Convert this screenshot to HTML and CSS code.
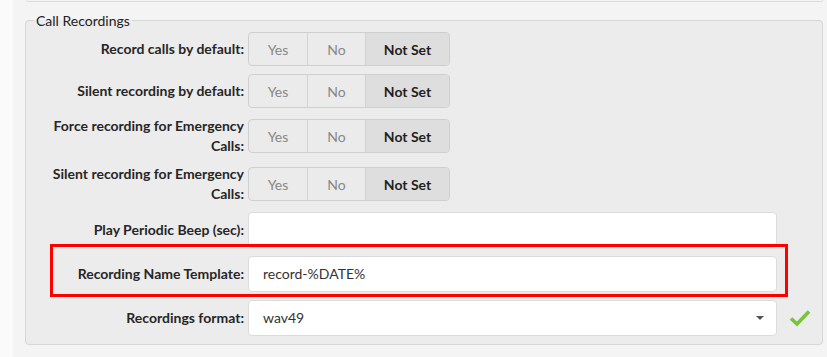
FILE: index.html
```html
<!DOCTYPE html>
<html>
<head>
	<meta charset="UTF-8">
	<title>Call Recordings</title>
	<link rel="stylesheet" href="styles.css">
</head>
<body>
	<div class="page">
		<div class="top-panel"></div>
		<fieldset class="group">
			<legend>Call Recordings</legend>

			<div class="row">
				<label class="lbl">Record calls by default:</label>
				<div class="btns">
					<span class="b yes">Yes</span>
					<span class="b no">No</span>
					<span class="b notset on">Not Set</span>
				</div>
			</div>

			<div class="row">
				<label class="lbl">Silent recording by default:</label>
				<div class="btns">
					<span class="b yes">Yes</span>
					<span class="b no">No</span>
					<span class="b notset on">Not Set</span>
				</div>
			</div>

			<div class="row">
				<label class="lbl">Force recording for Emergency Calls:</label>
				<div class="btns">
					<span class="b yes">Yes</span>
					<span class="b no">No</span>
					<span class="b notset on">Not Set</span>
				</div>
			</div>

			<div class="row">
				<label class="lbl">Silent recording for Emergency Calls:</label>
				<div class="btns">
					<span class="b yes">Yes</span>
					<span class="b no">No</span>
					<span class="b notset on">Not Set</span>
				</div>
			</div>

			<div class="row">
				<label class="lbl">Play Periodic Beep (sec):</label>
				<div class="field"></div>
				<div class="icon"></div>
			</div>

			<div class="row marked">
				<label class="lbl">Recording Name Template:</label>
				<div class="field">record-%DATE%</div>
				<div class="icon"></div>
			</div>

			<div class="row">
				<label class="lbl">Recordings format:</label>
				<div class="field select">wav49<span class="caret"></span></div>
				<div class="icon">
					<svg width="22" height="18" viewBox="0 0 22 18">
						<polyline points="2,9.5 8,15 20,2.5" fill="none" stroke="#78c43a" stroke-width="3.6"/>
					</svg>
				</div>
			</div>
		</fieldset>
	</div>
</body>
</html>
```

FILE: styles.css
```css
body {
	margin: 0;
	background: #fafafa;
	font-family: Lato, "Liberation Sans", sans-serif;
	color: #333;
}

.page {
	margin-left: 13px;
	background: #f4f4f4;
	height: 357px;
	padding: 0 4px 0 12px;
	overflow: hidden;
}

.top-panel {
	height: 1px;
	margin-left: 1px;
	border: 1px solid #dcdcdc;
	border-top: none;
	border-radius: 0 0 4px 4px;
}

.group {
	margin: 10px 0 0 0;
	padding: 3px 0 8px 20px;
	border: 1px solid #d6d6d6;
	border-radius: 4px;
	background: #ececec;
}

.group legend {
	font-size: 14px;
	line-height: 17px;
	padding: 0 2px;
	margin-left: -12px;
	color: #222;
}

.row {
	display: flex;
	align-items: center;
	margin-bottom: 8px;
}

.row:last-child {
	margin-bottom: 0;
}

.lbl {
	width: 198px;
	flex: none;
	text-align: right;
	font-size: 14px;
	font-weight: bold;
	line-height: 20px;
	color: #262626;
	margin-right: 4px;
}

.btns {
	display: flex;
	height: 32px;
	border: 1px solid #cfcfcf;
	border-radius: 4px;
	overflow: hidden;
	background: #ebebeb;
}

.b {
	display: flex;
	align-items: center;
	justify-content: center;
	font-size: 14px;
	color: #888;
	border-right: 1px solid #d2d2d2;
}

.b.yes { width: 58px; }
.b.no { width: 57px; }
.b.notset { width: 83px; border-right: none; }

.b.on {
	background: #dedede;
	color: #1e1e1e;
	font-weight: bold;
}

.field {
	flex: 1;
	height: 34px;
	line-height: 34px;
	border: 1px solid #dcdcdc;
	border-radius: 4px;
	background: #fff;
	padding-left: 14px;
	font-size: 14px;
	color: #333;
	position: relative;
}

.caret {
	position: absolute;
	right: 12px;
	top: 15px;
	border-left: 4px solid transparent;
	border-right: 4px solid transparent;
	border-top: 4px solid #555;
}

.icon {
	width: 45px;
	flex: none;
	display: flex;
	align-items: center;
	padding-left: 12px;
	box-sizing: border-box;
}

.icon svg {
	display: block;
}

.marked {
	position: relative;
}

.marked::after {
	content: "";
	position: absolute;
	left: 4px;
	right: 34px;
	top: -12px;
	bottom: -5px;
	border: 3px solid #f00;
}
```
